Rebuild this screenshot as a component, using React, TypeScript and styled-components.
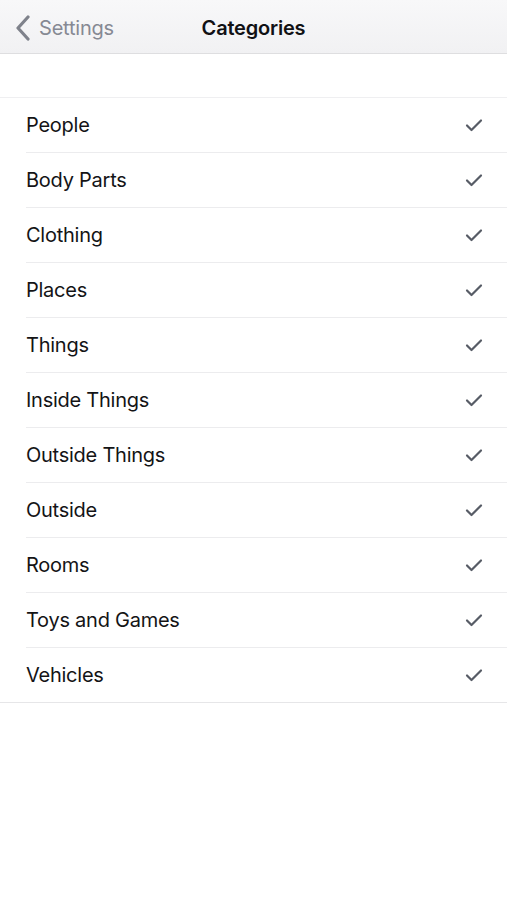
import React from "react";
import styled, { createGlobalStyle } from "styled-components";

const Global = createGlobalStyle`
  html, body { margin: 0; padding: 0; background: #ffffff; }
  body { font-family: Inter, "Liberation Sans", sans-serif; -webkit-font-smoothing: antialiased; }
`;

const Screen = styled.div`
  width: 507px;
  height: 900px;
  background: #ffffff;
  display: flex;
  flex-direction: column;
`;

const NavBar = styled.header`
  height: 54px;
  flex: none;
  display: grid;
  grid-template-columns: 1fr auto 1fr;
  align-items: center;
  padding-top: 2px;
  box-sizing: border-box;
  background: linear-gradient(#f8f8f9, #f1f1f3);
  border-bottom: 1px solid #dedee0;
`;

const BackButton = styled.div`
  display: flex;
  align-items: center;
  gap: 8px;
  padding-left: 15px;
  color: #868993;
  font-size: 20px;
  letter-spacing: -0.2px;
`;

const Title = styled.h1`
  margin: 0;
  font-size: 20px;
  font-weight: 600;
  color: #111114;
  letter-spacing: -0.2px;
`;

const Spacer = styled.div`
  height: 43px;
  flex: none;
`;

const List = styled.ul`
  list-style: none;
  margin: 0;
  padding: 0 0 0 26px;
  border-top: 1px solid #efeff1;
  border-bottom: 1px solid #e6e6e8;
`;

const Row = styled.li<{ $last?: boolean }>`
  height: 54px;
  display: flex;
  align-items: center;
  justify-content: space-between;
  padding-right: 24px;
  border-bottom: ${(p) => (p.$last ? "none" : "1px solid #ececee")};
  font-size: 20px;
  color: #141416;
  letter-spacing: -0.25px;
`;

const Check = () => (
  <svg width="18" height="14" viewBox="0 0 18 14">
    <path d="M2 7.5 L6.5 12 L16 2.5" fill="none" stroke="#575c66" strokeWidth="2.2" strokeLinecap="round" strokeLinejoin="round" />
  </svg>
);

const Chevron = () => (
  <svg width="16" height="26" viewBox="0 0 16 26">
    <path d="M13 2 L3 13 L13 24" fill="none" stroke="#7f828b" strokeWidth="3.2" strokeLinecap="round" strokeLinejoin="round" />
  </svg>
);

const items = [
  "People",
  "Body Parts",
  "Clothing",
  "Places",
  "Things",
  "Inside Things",
  "Outside Things",
  "Outside",
  "Rooms",
  "Toys and Games",
  "Vehicles",
];

export default function App() {
  return (
    <>
      <Global />
      <Screen>
        <NavBar>
          <BackButton>
            <Chevron />
            <span>Settings</span>
          </BackButton>
          <Title>Categories</Title>
          <div />
        </NavBar>
        <Spacer />
        <List>
          {items.map((it, i) => (
            <Row key={it} $last={i === items.length - 1}>
              <span>{it}</span>
              <Check />
            </Row>
          ))}
        </List>
      </Screen>
    </>
  );
}
